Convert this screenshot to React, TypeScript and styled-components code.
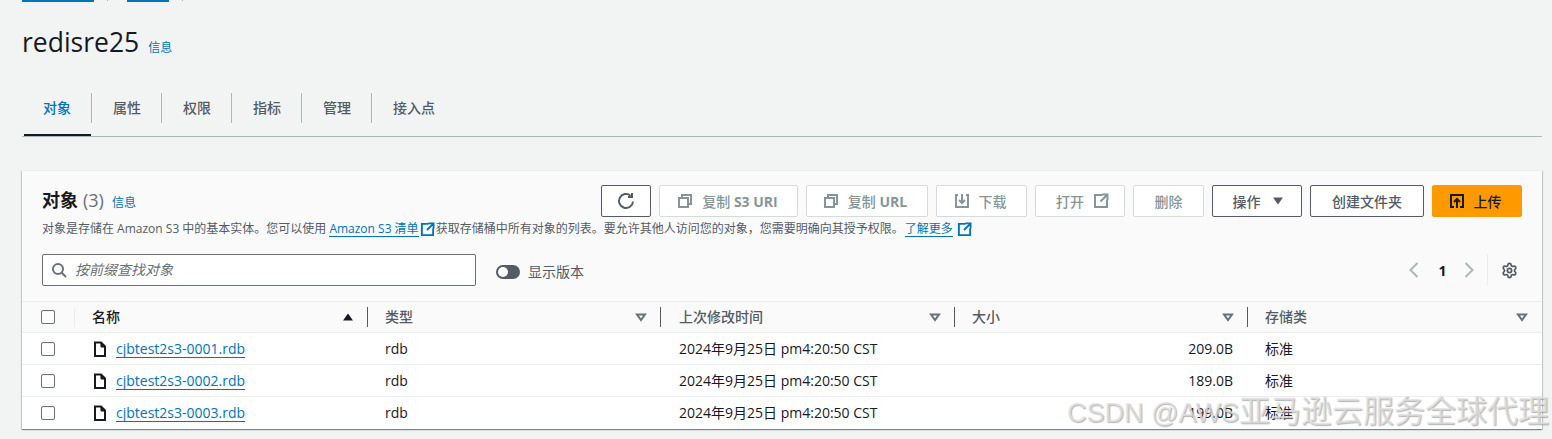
import React from 'react';
import styled, { createGlobalStyle } from 'styled-components';
import { Settings } from 'lucide-react';

const FONT = `"Open Sans", "Noto Sans CJK SC", sans-serif`;
const BLUE = '#0073bb';
const INK = '#16191f';
const GREY = '#545b64';
const DISABLED = '#879596';

const Global = createGlobalStyle`
  html, body { margin: 0; padding: 0; height: 439px; overflow: hidden; background: #f2f3f3; }
  body { font-family: ${FONT}; font-size: 14px; color: ${INK}; }
  * { box-sizing: border-box; }
`;

const Page = styled.div`
  position: relative;
  width: 1552px;
  height: 439px;
  overflow: hidden;
  padding: 0 10px 0 22px;
`;
const Crumbs = styled.div`
  display: flex;
  align-items: flex-start;
  height: 3px;
`;
const Crumb = styled.span<{ $w: number }>`
  display: block;
  width: ${p => p.$w}px;
  height: 2px;
  background: ${BLUE};
`;
const CrumbTick = styled.span`
  display: block;
  width: 1px;
  height: 1px;
  margin: 0 19px 0 13px;
  background: #aab7b8;
`;
const TitleRow = styled.div`
  display: flex;
  align-items: baseline;
  gap: 9px;
  height: 50px;
  padding-top: 21px;
`;
const Title = styled.h1`
  margin: 0;
  font-size: 26.5px;
  line-height: 36px;
  font-weight: 400;
  color: ${INK};
`;
const InfoLink = styled.a`
  font-size: 12px;
  line-height: 16px;
  color: ${BLUE};
`;
const Tabs = styled.div`
  display: flex;
  margin-top: 40px;
  height: 44px;
  padding: 0 0 0 2px;
  border-bottom: 1px solid #aab7b8;
  width: 1520px;
`;
const Tab = styled.div<{ $active?: boolean; $first?: boolean; $last?: boolean }>`
  position: relative;
  height: 43px;
  padding: 0 21px 0 ${p => (p.$first ? 19 : 21)}px;
  font-size: 14px;
  line-height: 30px;
  font-weight: 500;
  color: ${p => (p.$active ? BLUE : GREY)};
  &::before {
    content: '';
    display: ${p => (p.$active ? 'block' : 'none')};
    position: absolute;
    left: 0;
    right: 1px;
    bottom: 0;
    height: 2px;
    background: ${INK};
  }
  &::after {
    content: '';
    display: ${p => (p.$last ? 'none' : 'block')};
    position: absolute;
    right: 0;
    top: 0;
    width: 1px;
    height: 30px;
    background: #aab7b8;
  }
`;
const Panel = styled.section`
  margin-top: 33px;
  width: 1520px;
  height: 259px;
  background: #fff;
  border-top: 1px solid #eaeded;
  box-shadow: 0 1px 1px 0 rgba(0, 28, 36, 0.3), 1px 1px 1px 0 rgba(0, 28, 36, 0.15), -1px 1px 1px 0 rgba(0, 28, 36, 0.15);
`;
const PanelHead = styled.div`
  padding: 14px 20px 0;
  height: 130px;
  background: #fafafa;
`;
const TopRow = styled.div`
  display: flex;
  justify-content: space-between;
  height: 32px;
`;
const Heading = styled.div`
  display: flex;
  align-items: baseline;
  padding-top: 3px;
  gap: 5px;
  height: 32px;
`;
const HeadingText = styled.h2`
  margin: 0;
  font-size: 18px;
  line-height: 24px;
  font-weight: 700;
`;
const Count = styled.span`
  font-size: 18px;
  line-height: 24px;
  margin-right: 3px;
  color: #687078;
`;
const Actions = styled.div`
  display: flex;
  gap: 8px;
`;
const Btn = styled.button<{ $w: number; $kind?: 'off' | 'on' | 'main'; $pl?: number; $pr?: number }>`
  display: flex;
  align-items: center;
  justify-content: center;
  gap: 9px;
  width: ${p => p.$w}px;
  height: 32px;
  padding: 0 ${p => p.$pr ?? 0}px 0 ${p => p.$pl ?? 0}px;
  font-family: ${FONT};
  font-size: 14px;
  font-weight: 500;
  border-radius: 2px;
  border: 1px solid ${p => (p.$kind === 'off' ? '#d5dbdb' : p.$kind === 'main' ? '#ff9900' : GREY)};
  background: ${p => (p.$kind === 'main' ? '#ff9900' : '#ffffff')};
  color: ${p => (p.$kind === 'off' ? DISABLED : p.$kind === 'main' ? INK : GREY)};
`;
const BtnLatin = styled.b`
  font-weight: 700;
`;
const Desc = styled.p`
  margin: 3px 0 0;
  font-size: 12px;
  line-height: 16px;
  color: ${GREY};
  display: flex;
  align-items: center;
  height: 18px;
`;
const DescLink = styled.a<{ $ml?: number }>`
  color: ${BLUE};
  border-bottom: 1px solid ${BLUE};
  line-height: 15px;
  margin-left: ${p => p.$ml ?? 3}px;
`;
const ExtIcon = styled.svg<{ $ml?: number }>`
  width: 15px;
  height: 15px;
  flex: none;
  margin: 0 1px 0 ${p => p.$ml ?? 1}px;
`;
const FilterRow = styled.div`
  display: flex;
  align-items: flex-start;
  margin-top: 16px;
`;
const Search = styled.div`
  display: flex;
  align-items: center;
  gap: 8px;
  width: 434px;
  height: 32px;
  padding-left: 8px;
  background: #fff;
  border: 1px solid #687078;
  border-radius: 2px;
`;
const Placeholder = styled.span`
  margin-bottom: 2px;
  font-size: 14px;
  font-style: italic;
  color: #687078;
`;
const ToggleWrap = styled.div`
  display: flex;
  align-items: center;
  gap: 8px;
  margin: 2px 0 0 20px;
  height: 32px;
  font-size: 14px;
  color: ${GREY};
`;
const ToggleLabel = styled.span`
  margin-bottom: 2px;
`;
const Toggle = styled.span`
  display: block;
  position: relative;
  width: 24px;
  height: 14px;
  border-radius: 7px;
  background: ${GREY};
  &::after {
    content: '';
    position: absolute;
    left: 2px;
    top: 2px;
    width: 10px;
    height: 10px;
    border-radius: 50%;
    background: #fff;
  }
`;
const Pager = styled.div`
  display: flex;
  align-items: center;
  margin-left: auto;
  height: 32px;
  margin-right: 4px;
`;
const PageNum = styled.span`
  width: 39px;
  padding-left: 2px;
  text-align: center;
  font-size: 14px;
  font-weight: 700;
  color: ${INK};
`;
const PagerSep = styled.span`
  display: block;
  width: 1px;
  height: 32px;
  margin: 0 13px 0 10px;
  background: #eaeded;
`;
const Row = styled.div<{ $head?: boolean }>`
  display: grid;
  grid-template-columns: 53px 293px 293px 294px 293px 294px;
  height: ${p => (p.$head ? 31 : 32)}px;
  align-items: center;
  background: ${p => (p.$head ? '#fafafa' : '#fff')};
  border-top: 1px solid #eaeded;
`;
const CheckCell = styled.div<{ $head?: boolean }>`
  display: flex;
  align-items: center;
  padding-left: 19px;
  height: ${p => (p.$head ? '20px' : 'auto')};
  border-right: ${p => (p.$head ? '1px solid #eaeded' : 'none')};
`;
const Check = styled.span`
  display: block;
  width: 14px;
  height: 14px;
  background: #fff;
  border: 1px solid #687078;
  border-radius: 2px;
`;
const HeadCell = styled.div<{ $last?: boolean; $dark?: boolean; $pad?: number }>`
  display: flex;
  align-items: center;
  justify-content: space-between;
  height: 20px;
  padding: 0 ${p => (p.$last ? 14 : 13)}px 3px ${p => p.$pad ?? 17}px;
  font-size: 14px;
  font-weight: 500;
  color: ${p => (p.$dark ? INK : GREY)};
  border-right: ${p => (p.$last ? 'none' : `1px solid ${GREY}`)};
`;
const SortBox = styled.span`
  display: flex;
  margin-top: 3px;
`;
const Cell = styled.div<{ $right?: boolean; $pad?: number; $cjk?: boolean }>`
  display: flex;
  align-items: center;
  justify-content: ${p => (p.$right ? 'flex-end' : 'flex-start')};
  font-size: 14px;
  color: ${INK};
  padding-right: ${p => (p.$right ? 15 : 0)}px;
  padding-left: ${p => (p.$right ? 0 : p.$pad ?? 17)}px;
  padding-bottom: ${p => (p.$cjk ? 2 : 0)}px;
`;
const FileCell = styled(Cell)`
  gap: 8px;
  padding: 0 0 0 17px;
`;
const FileLink = styled.a`
  font-size: 14px;
  line-height: 17px;
  color: ${BLUE};
  border-bottom: 1px solid ${BLUE};
`;
const Watermark = styled.div`
  position: absolute;
  left: 1067px;
  top: 393px;
  white-space: nowrap;
  font-family: "Liberation Sans", "Noto Sans CJK SC", sans-serif;
  font-size: 31px;
  line-height: 38px;
  color: rgba(225, 225, 225, 0.75);
  text-shadow: 1px 1px 1px rgba(120, 120, 120, 0.55);
  pointer-events: none;
`;
const WatermarkLatin = styled.span`
  font-size: 27px;
`;
const CaretBox = styled.span`
  display: flex;
  margin-left: 2px;
`;

const CopyIcon = () => (
  <svg width="16" height="16" viewBox="0 0 16 16" fill="none" stroke="currentColor" strokeWidth="2">
    <path d="M5 5V2h9v9h-3" />
    <rect x="2" y="5" width="9" height="9" />
  </svg>
);
const ExternalIcon = () => (
  <svg width="16" height="16" viewBox="0 0 16 16" fill="none" stroke="currentColor" strokeWidth="2">
    <path d="M9 2H2v12h12V7" />
    <path d="M9 1.5h5.5V7M14 2L7.5 8.5" />
  </svg>
);
const DownloadIcon = () => (
  <svg width="16" height="16" viewBox="0 0 16 16" fill="none" stroke="currentColor" strokeWidth="2">
    <path d="M4 2H2v12h12V2h-2" />
    <path d="M8 1v8M5 7l3 3 3-3" />
  </svg>
);
const UploadIcon = () => (
  <svg width="16" height="16" viewBox="0 0 16 16" fill="none" stroke="currentColor" strokeWidth="2">
    <path d="M5 14H2V2h12v12h-3" />
    <path d="M8 15V7M5 9l3-3 3 3" />
  </svg>
);
const RefreshIcon = () => (
  <svg width="18" height="18" viewBox="0 0 18 18" fill="none" stroke="currentColor" strokeWidth="2">
    <path d="M16 9.5a7 7 0 1 1-2.4-5.8" />
    <path d="M15 1v4h-4" />
  </svg>
);
const SearchIcon = () => (
  <svg width="16" height="16" viewBox="0 0 16 16" fill="none" stroke="#687078" strokeWidth="2">
    <circle cx="7" cy="7" r="5" />
    <path d="M10.5 10.5L15 15" />
  </svg>
);
const FileIcon = () => (
  <svg width="16" height="16" viewBox="0 0 16 16" fill="none" stroke={INK} strokeWidth="2">
    <path d="M3 1.5h6l4 4V15H3z" />
    <path d="M9 1v5h4.5" fill={INK} strokeWidth="1" />
  </svg>
);
const Chevron = ({ right }: { right?: boolean }) => (
  <svg width="16" height="16" viewBox="0 0 16 16" fill="none" stroke="#aab7b8" strokeWidth="2">
    <path d={right ? 'M4.5 1l7 7-7 7' : 'M11.5 1l-7 7 7 7'} />
  </svg>
);
const CaretDown = () => (
  <svg width="12" height="8" viewBox="0 0 12 8" fill="currentColor">
    <path d="M1 0.5h10L6 7.5z" />
  </svg>
);
const CaretUp = () => (
  <svg width="12" height="8" viewBox="0 0 12 8" fill={INK}>
    <path d="M1 7.5h10L6 0.5z" />
  </svg>
);
const SortIcon = () => (
  <svg width="12" height="9" viewBox="0 0 12 9" fill="none" stroke="#687078" strokeWidth="2">
    <path d="M2 1.5h8L6 7z" />
  </svg>
);

const files = [
  { name: 'cjbtest2s3-0001.rdb', size: '209.0B' },
  { name: 'cjbtest2s3-0002.rdb', size: '189.0B' },
  { name: 'cjbtest2s3-0003.rdb', size: '199.0B' },
];
const tabs = ['对象', '属性', '权限', '指标', '管理', '接入点'];

export default function App() {
  return (
    <Page>
      <Global />
      <Crumbs>
        <Crumb $w={72} />
        <CrumbTick />
        <Crumb $w={42} />
        <CrumbTick />
      </Crumbs>
      <TitleRow>
        <Title>redisre25</Title>
        <InfoLink>信息</InfoLink>
      </TitleRow>
      <Tabs>
        {tabs.map((t, i) => (
          <Tab key={t} $active={i === 0} $first={i === 0} $last={i === tabs.length - 1}>
            {t}
          </Tab>
        ))}
      </Tabs>
      <Panel>
        <PanelHead>
          <TopRow>
            <Heading>
              <HeadingText>对象</HeadingText>
              <Count>(3)</Count>
              <InfoLink>信息</InfoLink>
            </Heading>
            <Actions>
              <Btn $w={50} $kind="on"><RefreshIcon /></Btn>
              <Btn $w={139} $kind="off" $pr={2}><CopyIcon /><span>复制 <BtnLatin>S3 URI</BtnLatin></span></Btn>
              <Btn $w={122} $kind="off" $pr={4}><CopyIcon /><span>复制 <BtnLatin>URL</BtnLatin></span></Btn>
              <Btn $w={91} $kind="off" $pr={3}><DownloadIcon />下载</Btn>
              <Btn $w={90} $kind="off" $pl={5}>打开<ExternalIcon /></Btn>
              <Btn $w={71} $kind="off">删除</Btn>
              <Btn $w={90} $kind="on" $pl={2}>操作<CaretBox><CaretDown /></CaretBox></Btn>
              <Btn $w={114} $kind="on">创建文件夹</Btn>
              <Btn $w={90} $kind="main" $pr={4}><UploadIcon />上传</Btn>
            </Actions>
          </TopRow>
          <Desc>
            对象是存储在 Amazon S3 中的基本实体。您可以使用
            <DescLink>Amazon S3 清单</DescLink>
            <ExtIcon viewBox="0 0 16 16" fill="none" stroke={BLUE} strokeWidth="2">
              <path d="M9 2H2v12h12V7M9 1.5h5.5V7M14 2L7.5 8.5" />
            </ExtIcon>
            获取存储桶中所有对象的列表。要允许其他人访问您的对象，您需要明确向其授予权限。
            <DescLink $ml={1}>了解更多</DescLink>
            <ExtIcon viewBox="0 0 16 16" fill="none" stroke={BLUE} strokeWidth="2" $ml={4}>
              <path d="M9 2H2v12h12V7M9 1.5h5.5V7M14 2L7.5 8.5" />
            </ExtIcon>
          </Desc>
          <FilterRow>
            <Search>
              <SearchIcon />
              <Placeholder>按前缀查找对象</Placeholder>
            </Search>
            <ToggleWrap>
              <Toggle />
              <ToggleLabel>显示版本</ToggleLabel>
            </ToggleWrap>
            <Pager>
              <Chevron />
              <PageNum>1</PageNum>
              <Chevron right />
              <PagerSep />
              <Settings size={17} color={GREY} strokeWidth={2.4} />
            </Pager>
          </FilterRow>
        </PanelHead>
        <Row $head>
          <CheckCell $head><Check /></CheckCell>
          <HeadCell $dark>名称<SortBox><CaretUp /></SortBox></HeadCell>
          <HeadCell>类型<SortBox><SortIcon /></SortBox></HeadCell>
          <HeadCell $pad={18}>上次修改时间<SortBox><SortIcon /></SortBox></HeadCell>
          <HeadCell>大小<SortBox><SortIcon /></SortBox></HeadCell>
          <HeadCell $last>存储类<SortBox><SortIcon /></SortBox></HeadCell>
        </Row>
        {files.map(f => (
          <Row key={f.name}>
            <CheckCell><Check /></CheckCell>
            <FileCell>
              <FileIcon />
              <FileLink>{f.name}</FileLink>
            </FileCell>
            <Cell>rdb</Cell>
            <Cell $pad={18} $cjk>2024年9月25日 pm4:20:50 CST</Cell>
            <Cell $right>{f.size}</Cell>
            <Cell $cjk>标准</Cell>
          </Row>
        ))}
      </Panel>
      <Watermark>
        <WatermarkLatin>CSDN @AWS</WatermarkLatin>亚马逊云服务全球代理
      </Watermark>
    </Page>
  );
}
